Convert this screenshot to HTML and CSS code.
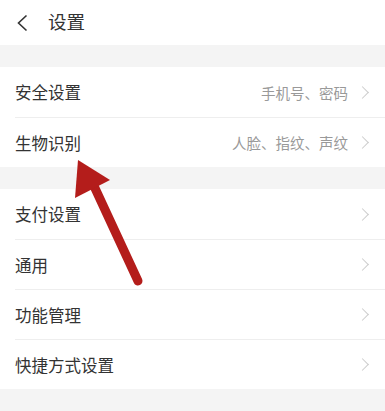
FILE: index.html
```html
<!DOCTYPE html>
<html lang="zh">
<head>
<meta charset="utf-8">
<link rel="stylesheet" href="styles.css">
</head>
<body>
<div class="page">
  <header class="topbar">
    <svg class="back" width="14" height="20" viewBox="0 0 14 20"><path d="M11.5 2.5 L3.5 10 L11.5 17.5" fill="none" stroke="#333" stroke-width="1.6"/></svg>
    <span class="title">设置</span>
  </header>
  <div class="gap"></div>
  <section class="group">
    <div class="row"><span class="label">安全设置</span><span class="value">手机号、密码</span><span class="chev"></span></div>
    <div class="row"><span class="label">生物识别</span><span class="value">人脸、指纹、声纹</span><span class="chev"></span></div>
  </section>
  <div class="gap"></div>
  <section class="group">
    <div class="row"><span class="label">支付设置</span><span class="chev"></span></div>
    <div class="row"><span class="label">通用</span><span class="chev"></span></div>
    <div class="row"><span class="label">功能管理</span><span class="chev"></span></div>
    <div class="row"><span class="label">快捷方式设置</span><span class="chev"></span></div>
  </section>
  <svg class="arrow" width="385" height="411" viewBox="0 0 385 411">
    <line x1="138" y1="281" x2="94" y2="186" stroke="#b41d1b" stroke-width="9" stroke-linecap="round"/>
    <polygon points="78,160 75,198 110,180" fill="#b41d1b"/>
  </svg>
</div>
</body>
</html>
```
FILE: styles.css
```css
html, body {
  margin: 0;
  padding: 0;
}
body {
  background: #f4f4f4;
  font-family: "Noto Sans CJK SC", "Noto Sans", sans-serif;
  color: #333;
}
.page {
  position: relative;
  width: 385px;
  height: 411px;
  overflow: hidden;
}
.topbar {
  height: 45px;
  background: #fff;
  display: flex;
  align-items: center;
  padding-left: 15px;
  box-sizing: border-box;
}
.back {
  margin-right: 19px;
}
.title {
  font-size: 18.5px;
  color: #333;
  line-height: 1;
  margin-top: -3px;
}
.gap {
  height: 22px;
}
.group {
  background: #fff;
  padding-left: 15px;
}
.row {
  height: 50px;
  display: flex;
  align-items: center;
  border-top: 1px solid #eeeeee;
  box-sizing: border-box;
  padding-right: 15px;
}
.row:first-child {
  border-top: none;
}
.label {
  font-size: 16.5px;
  color: #333;
  flex: 1;
}
.value {
  font-size: 14.5px;
  color: #999;
  margin-right: 10px;
}
.chev {
  width: 8px;
  height: 8px;
  border-top: 1.5px solid #cccccc;
  border-right: 1.5px solid #cccccc;
  transform: rotate(45deg);
  margin-right: 3px;
}
.arrow {
  position: absolute;
  left: 0;
  top: 0;
  pointer-events: none;
}
```
